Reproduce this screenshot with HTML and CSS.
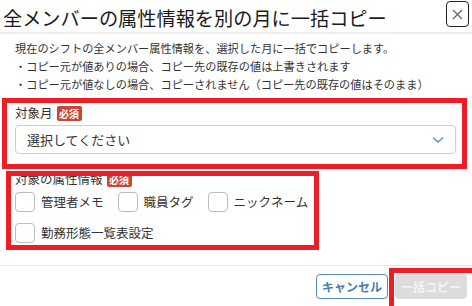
FILE: index.html
```html
<!DOCTYPE html>
<html lang="ja">
<head>
<meta charset="utf-8">
<link rel="stylesheet" href="styles.css">
</head>
<body>
<div class="dialog">
  <div class="header">
    <h1 class="title">全メンバーの属性情報を別の月に一括コピー</h1>
    <button class="close" aria-label="閉じる">
      <svg width="11" height="11" viewBox="0 0 11 11"><path d="M1 1L10 10M10 1L1 10" stroke="#6b6b6b" stroke-width="1.4" fill="none"/></svg>
    </button>
  </div>
  <div class="content">
    <div class="desc">
      <p>現在のシフトの全メンバー属性情報を、選択した月に一括でコピーします。</p>
      <p>・コピー元が値ありの場合、コピー先の既存の値は上書きされます</p>
      <p>・コピー元が値なしの場合、コピーされません（コピー先の既存の値はそのまま）</p>
    </div>
    <div class="field field-month">
      <div class="label">対象月<span class="req">必須</span></div>
      <div class="select">
        <span>選択してください</span>
        <svg width="12" height="8" viewBox="0 0 12 8"><path d="M1 1.5L6 6L11 1.5" stroke="#5a8fbd" stroke-width="1.4" fill="none"/></svg>
      </div>
    </div>
    <div class="field field-attr">
      <div class="label">対象の属性情報<span class="req">必須</span></div>
      <div class="checks">
        <label class="check"><span class="box"></span>管理者メモ</label>
        <label class="check"><span class="box"></span>職員タグ</label>
        <label class="check"><span class="box"></span>ニックネーム</label>
        <label class="check"><span class="box"></span>勤務形態一覧表設定</label>
      </div>
    </div>
  </div>
  <div class="footer">
    <button class="btn btn-cancel">キャンセル</button>
    <button class="btn btn-copy">一括コピー</button>
  </div>
  <div class="mark mark-1"></div>
  <div class="mark mark-2"></div>
  <div class="mark mark-3"></div>
</div>
</body>
</html>
```
FILE: styles.css
```css
* { box-sizing: border-box; }
html, body { margin: 0; padding: 0; background: #fff; }
body {
  font-family: "Noto Sans CJK JP", "Noto Sans", sans-serif;
  color: #222;
}
.dialog {
  position: relative;
  width: 472px;
  height: 306px;
  overflow: hidden;
  background: #fff;
}
.header {
  display: flex;
  justify-content: space-between;
  align-items: flex-start;
  height: 34px;
  border-bottom: 2px solid #eeeeee;
}
.title {
  margin: 0;
  padding: 7px 0 0 3px;
  font-size: 19.2px;
  font-weight: 400;
  line-height: 22px;
  color: #1a1a1a;
}
.close {
  margin: 1px 3px 0 0;
  width: 23px;
  height: 26px;
  padding: 0;
  border: 1.5px solid #222;
  border-radius: 4px;
  background: #fff;
  display: flex;
  align-items: center;
  justify-content: center;
}
.content {
  padding: 5px 16px 0 15px;
}
.desc p {
  margin: 0;
  font-size: 11.2px;
  line-height: 18px;
  color: #333;
}
.field-month { margin-top: 12px; }
.label {
  display: flex;
  align-items: center;
  font-size: 12.5px;
  line-height: 16px;
  color: #333;
}
.req {
  margin-left: 4px;
  padding: 0 2.5px;
  background: #c8453b;
  color: #fff;
  font-size: 10px;
  font-weight: 700;
  line-height: 15px;
  border-radius: 2px;
}
.select {
  margin-top: 4px;
  height: 29px;
  border: 1px solid #cfcfcf;
  border-radius: 4px;
  display: flex;
  align-items: center;
  justify-content: space-between;
  padding: 0 11px 0 11px;
  font-size: 13px;
  color: #333;
}
.field-attr { margin-top: 17px; }
.checks {
  display: flex;
  flex-wrap: wrap;
  column-gap: 14px;
  row-gap: 11px;
  margin-top: 5px;
  width: 310px;
}
.check {
  display: flex;
  align-items: center;
  gap: 6px;
  font-size: 12.5px;
  line-height: 20px;
  color: #333;
}
.box {
  width: 20px;
  height: 20px;
  border: 1px solid #bdbdbd;
  border-radius: 4px;
  background: #fff;
}
.footer {
  position: absolute;
  left: 0;
  right: 0;
  top: 265px;
  height: 41px;
  border-top: 1px solid #e6e6e6;
  display: flex;
  justify-content: flex-end;
  align-items: flex-start;
  gap: 7px;
  padding: 8px 5px 0 0;
}
.btn {
  height: 25px;
  width: 72px;
  padding: 0;
  border-radius: 4px;
  font-family: inherit;
  font-size: 12px;
  font-weight: 700;
}
.btn-cancel {
  border: 1px solid #5a8fbd;
  background: #fff;
  color: #4a7fae;
}
.btn-copy {
  border: 1px solid #dcdcdc;
  background: #dcdcdc;
  color: #f4f4f4;
}
.mark {
  position: absolute;
  border: 5px solid #ee1c25;
  pointer-events: none;
}
.mark-1 { left: 2px; top: 98px; width: 465px; height: 71px; }
.mark-2 { left: 6px; top: 171px; width: 313px; height: 79px; }
.mark-3 { left: 389px; top: 268px; width: 90px; height: 45px; }
```
